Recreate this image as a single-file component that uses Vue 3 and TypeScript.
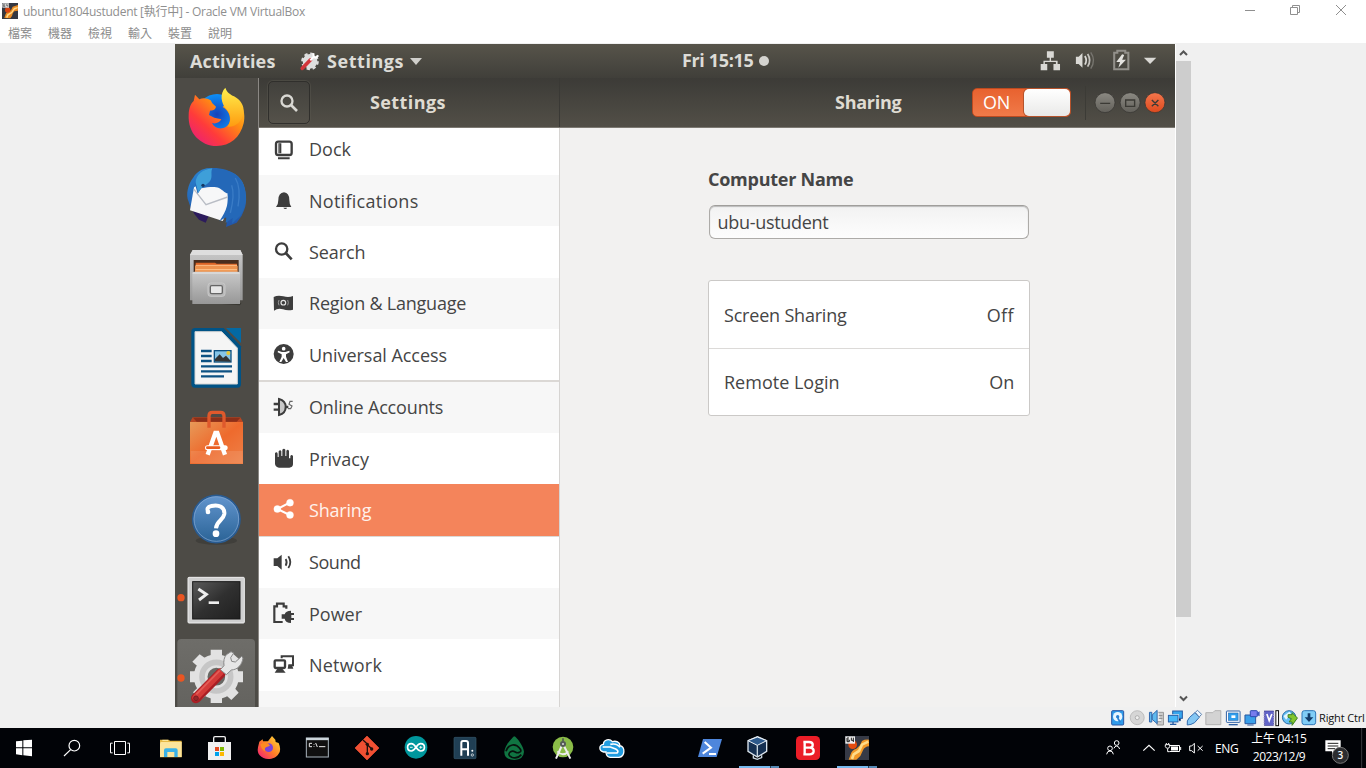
<script setup lang="ts">
interface Row {
  name: string
  icon: string
  view: string
  spacing: string
  alt?: boolean
  active?: boolean
  group?: boolean
}

const menus: string[] = ['檔案', '機器', '檢視', '輸入', '裝置', '說明']

const rows: Row[] = [
  { name: 'Dock', icon: 'dock', view: '39 29 72 72', spacing: '0' },
  { name: 'Notifications', icon: 'bell', view: '39 183 72 72', spacing: '.27px', alt: true },
  { name: 'Search', icon: 'search', view: '39 337 72 72', spacing: '-.1px' },
  { name: 'Region & Language', icon: 'flag', view: '39 491 72 72', spacing: '-.23px', alt: true },
  { name: 'Universal Access', icon: 'access', view: '39 645 72 72', spacing: '-.05px' },
  { name: 'Online Accounts', icon: 'online', view: '39 46 72 72', spacing: '-.15px', alt: true, group: true },
  { name: 'Privacy', icon: 'hand', view: '39 201 72 72', spacing: '.12px' },
  { name: 'Sharing', icon: 'share', view: '39 354 72 72', spacing: '-.2px', active: true },
  { name: 'Sound', icon: 'sound', view: '39 511 72 72', spacing: '-.45px' },
  { name: 'Power', icon: 'power', view: '39 665 72 72', spacing: '0', alt: true },
  { name: 'Network', icon: 'network', view: '39 819 72 72', spacing: '.2px' },
  { name: '', icon: 'more', view: '39 971 72 72', spacing: '0', alt: true },
]
</script>

<template>
  <div class="screen">
    <header class="titlebar">
      <svg class="app-icon" viewBox="6 9 48 48">
        <rect x="6" y="9" width="48" height="48" fill="#343741" />
        <path d="M13 54 17 42Q20 34 33 31L38 20 54 15V32L43 34Q38 37 36 48L31 55Z" fill="#e98a22" />
        <path d="M18 52 22 43 34 36 42 24 53 21V25L43 29 36 40 26 46 22 54Z" fill="#ffd98a" />
        <circle cx="23" cy="30" r="8" fill="#d84412" />
        <rect x="7" y="10" width="20" height="13" fill="#e6e6e6" />
        <path d="M10 13H15M10 13V20H15V17H10M19 12V17H24M24 12V21" stroke="#555" stroke-width="2" fill="none" />
      </svg>
      <span class="title">ubuntu1804ustudent [執行中] - Oracle VM VirtualBox</span>
      <svg class="win-controls" viewBox="0 0 138 24">
        <g fill="none" stroke="#8f8f8f">
          <path d="M17 10.5H27M62.500 7.500H69.500V14.500H62.500ZM64.500 7.500V5.500H71.500V12.500H69.500M108 5 118 15M118 5 108 15" />
        </g>
      </svg>
    </header>
    <nav class="menubar"><span v-for="m in menus" :key="m">{{ m }}</span></nav>

    <main class="stage">
      <div class="vm">
        <div class="topbar">
          <span class="activities">Activities</span>
          <svg class="tb-icon" viewBox="900 150 60 60">
            <circle cx="930" cy="181" r="12" fill="none" stroke="#dedede" stroke-width="20" />
            <circle cx="930" cy="181" r="23" fill="none" stroke="#dedede" stroke-width="7" stroke-dasharray="10 8.060" />
            <path d="M907 202 931 177" stroke="#d3343a" stroke-width="11" stroke-linecap="round" />
            <path d="M931 178 943 165M941 157Q938 169 948 170L955 163" stroke="#fff" stroke-width="6" fill="none" />
          </svg>
          <span class="app-name">Settings</span>
          <svg class="caret" viewBox="0 0 12 7"><path d="M0 0H12L6 7Z" fill="#d0cfcb" /></svg>
          <span class="clock">Fri 15:15</span>
          <i class="dot"></i>
          <svg class="indicators" viewBox="1104 0 339 102" preserveAspectRatio="none">
            <path d="M1124 22H1144V41H1124ZM1106 60H1125V79H1106ZM1143 60H1162V79H1143ZM1132 40H1136V50H1155V60H1150V54H1118V60H1114V50H1132Z" fill="#dad9d5" />
            <path d="M1208 38H1216L1227 27V71L1216 60H1208Z" fill="#dad9d5" />
            <path d="M1234 36Q1242 49 1234 62" fill="none" stroke="#dad9d5" stroke-width="5" />
            <path d="M1242 30Q1254 49 1242 68" fill="none" stroke="#c5c3be" stroke-width="5" />
            <path d="M1251 25Q1267 49 1251 74" fill="none" stroke="#77756f" stroke-width="4" />
            <path d="M1319 76V26H1328V20H1351V26H1360V76Z" fill="none" stroke="#92908a" stroke-width="6" />
            <path d="M1342 31 1325 54H1336L1331 71 1353 47H1342L1348 33Z" fill="#e4e3df" />
            <path d="M1405 41H1441L1423 60Z" fill="#dad9d5" />
          </svg>
        </div>

        <div class="body">
          <aside class="dock">
            <svg viewBox="0 0 249 240">
              <defs>
                <linearGradient id="fx" x1="0" y1="1" x2="1" y2="0">
                  <stop offset="0" stop-color="#e4168c" /><stop offset=".35" stop-color="#ff3b3a" />
                  <stop offset=".65" stop-color="#ff8e12" /><stop offset="1" stop-color="#ffdc35" />
                </linearGradient>
                <radialGradient id="globe"><stop offset="0" stop-color="#1742b8" /><stop offset="1" stop-color="#0c8ff8" /></radialGradient>
                <linearGradient id="yel" x1="0" y1="0" x2="0" y2="1"><stop offset="0" stop-color="#fff04c" /><stop offset="1" stop-color="#ff9b10" /></linearGradient>
              </defs>
              <circle cx="126" cy="109" r="61" fill="url(#globe)" />
              <path d="M41 110C42 88 48 76 56 69L60 50 73 64C84 58 98 61 107 67L112 76 123 86C121 96 112 97 105 98L102 111 118 119 139 124C134 133 122 139 111 135C120 158 157 156 164 132C168 113 159 96 143 87C160 65 184 61 195 79C209 92 210 119 206 136C196 179 165 204 125 204C76 203 38 165 41 110Z" fill="url(#fx)" />
              <path d="M151 29C134 46 137 75 155 94C167 108 171 128 157 146C180 149 201 132 206 101C207 82 197 66 177 55C166 49 156 44 151 29Z" fill="url(#yel)" />
            </svg>
            <svg viewBox="0 240 249 240">
              <defs><linearGradient id="tb" x1="0" y1="0" x2="0" y2="1"><stop offset="0" stop-color="#2a83d0" /><stop offset="1" stop-color="#2154a8" /></linearGradient></defs>
              <path d="M50 398 41 371C31 351 39 318 56 297C62 285 84 268 107 270L116 277C151 271 186 285 202 311C214 333 218 373 207 397L200 413 185 434 153 447 158 420 45 390Z" fill="url(#tb)" />
              <path d="M53 398 101 414 92 434 72 425 58 408Z" fill="#2c1b5c" />
              <path d="M57 328 83 314 158 326 158 400 143 429 45 397Z" fill="#f7f7f8" />
              <path d="M57 334 93 380 158 357" fill="none" stroke="#b9bdc5" stroke-width="4" />
              <path d="M102 271C78 280 62 300 61 322L68 347 79 331C100 327 120 325 132 330C146 338 150 346 158 346C162 371 156 398 133 430L154 417 152 435 173 420 171 437 196 413C218 381 220 324 187 293C164 275 130 268 102 271Z" fill="#2468b8" />
              <path d="M62 314C62 291 84 273 112 271C104 286 119 303 96 318 83 326 76 331 70 345Z" fill="#3e9fd9" />
              <path d="M181 300Q199 330 189 385M170 322Q180 350 166 405" fill="none" stroke="#3a7cc6" stroke-width="4" />
              <circle cx="84" cy="322" r="5" fill="#163864" />
            </svg>
            <svg viewBox="0 480 249 240">
              <defs><linearGradient id="fl" x1="0" y1="0" x2="0" y2="1"><stop offset="0" stop-color="#c9c9c9" /><stop offset="1" stop-color="#979797" /></linearGradient></defs>
              <path d="M45 671 195 682 204 668 200 675Z" fill="#393832" />
              <path d="M53 516H196L203 530V667H45V530Z" fill="url(#fl)" />
              <path d="M53 516H196L203 531H45Z" fill="#dedede" />
              <rect x="56" y="546" width="135" height="40" fill="#4a2e1e" />
              <path d="M62 560V554H120L125 557H186V586H62Z" fill="#dc6425" />
              <path d="M60 563H188V583H60Z" fill="#ee934e" />
              <path d="M62 562H186M62 575H186" stroke="#ffc58f" stroke-width="3" />
              <path d="M52 586 57 581H190L195 586V678H52Z" fill="url(#fl)" />
              <path d="M53 585H194" stroke="#ddd" stroke-width="4" />
              <rect x="99" y="615" width="51" height="40" rx="8" fill="#b9b9b9" stroke="#c8c8c8" stroke-width="3" />
              <rect x="106" y="623" width="36" height="24" rx="4" fill="#e7e7e7" stroke="#666" stroke-width="4" />
            </svg>
            <svg viewBox="0 9 249 240">
              <path d="M60 39H146L198 94V207Q198 218 188 218H60Q49 218 49 207V50Q49 39 60 39Z" fill="#005386" />
              <path d="M153 39H198V84Z" fill="#0369a3" />
              <path d="M60 50H140L187 99V207H60Z" fill="#f5f5f5" stroke="#d5d5d5" stroke-width="3" />
              <path d="M78 108H110M78 123H110M78 138H110M78 154H171M78 169H171M78 184H147" stroke="#0d5182" stroke-width="7" />
              <rect x="118" y="107" width="50" height="34" fill="#86c5e8" stroke="#0d5182" stroke-width="4" />
              <circle cx="160" cy="114" r="6" fill="#e6c838" />
              <path d="M120 139V132L134 118 144 129 153 122 167 137V140Z" fill="#343434" />
            </svg>
            <svg viewBox="0 249 249 240">
              <defs><linearGradient id="sw" x1="0" y1="0" x2="1" y2="1"><stop offset="0" stop-color="#e79a59" /><stop offset=".5" stop-color="#ee6a2d" /><stop offset="1" stop-color="#ee8148" /></linearGradient></defs>
              <path d="M53 307H196L204 321H45Z" fill="#b94622" />
              <path d="M54 308 65 320H185L196 308" fill="#8b2f19" />
              <path d="M45 321H204V447H45Z" fill="url(#sw)" />
              <path d="M47 408H203V445H47Z" fill="#fff" opacity=".1" />
              <path d="M102 338V303Q102 292 112 292H137Q147 292 147 303V338" fill="none" stroke="#df592c" stroke-width="10" />
              <path d="M98 419 121 354H127L150 419" fill="none" stroke="#fff" stroke-width="13" />
              <rect x="90" y="391" width="68" height="15" rx="7.500" fill="#fff" />
              <path d="M97 398H132" stroke="#e95d21" stroke-width="8" stroke-linecap="round" />
            </svg>
            <svg viewBox="0 489 249 240">
              <defs><linearGradient id="hp" x1="0" y1="0" x2="0" y2="1"><stop offset="0" stop-color="#6295ce" /><stop offset="1" stop-color="#2a6396" /></linearGradient></defs>
              <ellipse cx="124" cy="677" rx="62" ry="12" fill="#403f3b" />
              <circle cx="124" cy="612" r="71" fill="url(#hp)" stroke="#295b91" stroke-width="5" />
              <circle cx="124" cy="612" r="67" fill="none" stroke="#8aabd4" stroke-width="2" />
              <path d="M100 592Q92 576 109 573C132 567 150 577 148 597C145 617 124 617 123 640" fill="none" stroke="#fff" stroke-width="12" />
              <circle cx="99" cy="591" r="7" fill="#fff" /><circle cx="123" cy="656" r="10" fill="#fff" />
            </svg>
            <svg viewBox="0 24 249 240">
              <defs><linearGradient id="tm" x1="0" y1="0" x2="1" y2="1"><stop offset="0" stop-color="#5a5a5a" /><stop offset=".5" stop-color="#303030" /><stop offset="1" stop-color="#202020" /></linearGradient></defs>
              <circle cx="18" cy="143" r="11" fill="#ea5522" />
              <rect x="39" y="82" width="169" height="137" rx="3" fill="#cfcfcf" stroke="#eee" stroke-width="3" />
              <rect x="53" y="95" width="142" height="112" fill="url(#tm)" stroke="#191919" stroke-width="3" />
              <path d="M70 117 94 133 72 150" fill="none" stroke="#eee" stroke-width="9" /><path d="M101 158H132" stroke="#eee" stroke-width="8" />
            </svg>
            <svg viewBox="0 264 249 240">
              <defs><linearGradient id="bg" x1="0" y1="0" x2="0" y2="1"><stop offset="0" stop-color="#6e6d69" /><stop offset="1" stop-color="#64635f" /></linearGradient></defs>
              <path d="M7 471V279Q7 267 19 267H228Q240 267 240 279V471Z" fill="url(#bg)" />
              <circle cx="18" cy="384" r="11" fill="#ea5522" />
              <circle cx="124" cy="380" r="47" fill="none" stroke="#e2e2e2" stroke-width="41" />
              <path d="M107 322V299H141V322ZM107 438V459H141V438ZM183 364H204V397H183ZM45 364H66V397H45ZM153 328 169 307 196 331 177 351ZM71 352 52 335 74 313 95 328ZM72 409 54 427 77 449 96 434ZM176 411 191 428 169 450 150 433Z" fill="#e2e2e2" />
              <circle cx="124" cy="380" r="43" fill="none" stroke="#c6c6c6" stroke-width="17" />
              <path d="M63 445 137 370" stroke="#a91e24" stroke-width="30" stroke-linecap="round" />
              <path d="M62 443 136 367" stroke="#d33a38" stroke-width="20" stroke-linecap="round" />
              <path d="M64 433 134 362" stroke="#e35b56" stroke-width="5" />
              <path d="M136 359 147 347Q144 326 154 314L168 305 176 309 167 323 170 334 181 336 200 319 204 324C201 344 189 359 169 360L154 374Z" fill="#e6e6e6" stroke="#888" stroke-width="3" />
              <circle cx="63" cy="445" r="7" fill="#96272b" stroke="#7b2022" stroke-width="3" />
            </svg>
          </aside>

          <section class="window">
            <header class="headerbar">
              <div class="head-left">
                <button class="search-btn">
                  <svg viewBox="836 278 60 60"><circle cx="860" cy="302" r="16.500" fill="none" stroke="#d9d8d3" stroke-width="7" /><path d="M872 314 890 332" stroke="#d9d8d3" stroke-width="8" /></svg>
                </button>
                <span class="h-settings">Settings</span>
              </div>
              <div class="head-right">
                <span class="h-sharing">Sharing</span>
                <div class="switch"><span>ON</span><i></i></div>
                <i class="vsep"></i>
                <svg class="wm" viewBox="1260 132 210 90" preserveAspectRatio="none">
                  <defs>
                    <linearGradient id="gb" x1="0" y1="0" x2="0" y2="1"><stop offset="0" stop-color="#8b8982" /><stop offset="1" stop-color="#62605a" /></linearGradient>
                    <linearGradient id="ob" x1="0" y1="0" x2="0" y2="1"><stop offset="0" stop-color="#f4764c" /><stop offset="1" stop-color="#dd4a1e" /></linearGradient>
                  </defs>
                  <g stroke="#34332f" stroke-width="2">
                    <ellipse cx="1292" cy="176" rx="29" ry="30" fill="url(#gb)" />
                    <ellipse cx="1365" cy="176" rx="29" ry="30" fill="url(#gb)" />
                    <ellipse cx="1437" cy="176" rx="29" ry="30" fill="url(#ob)" />
                  </g>
                  <path d="M1278 178H1307M1352 168H1378V187H1352ZM1428 168 1447 187M1447 168 1428 187" fill="none" stroke="#3b3a35" stroke-width="4" />
                </svg>
              </div>
            </header>

            <div class="panes">
              <ul class="list">
                <li v-for="r in rows" :key="r.icon" :class="{ alt: r.alt, active: r.active, group: r.group }">
                  <svg :viewBox="r.view" fill="#3d3d3d" stroke="none">
                    <template v-if="r.icon === 'dock'">
                      <rect x="51" y="40" width="47" height="40" rx="7" fill="none" stroke="#3d3d3d" stroke-width="7" />
                      <path d="M58 45H67V75H58ZM57 87H92V93H57Z" /><path d="M60 46V74" stroke="#aaa" stroke-width="2" />
                    </template>
                    <path v-else-if="r.icon === 'bell'" d="M51 237Q58 230 58 216Q58 195 75 193Q91 195 91 216Q91 230 97 237ZM73 239H84Q84 243 79 243Q75 243 73 239Z" />
                    <template v-else-if="r.icon === 'search'">
                      <circle cx="68" cy="364" r="17" fill="none" stroke="#3d3d3d" stroke-width="7" /><path d="M80 376 98 395" stroke="#3d3d3d" stroke-width="8" />
                    </template>
                    <template v-else-if="r.icon === 'flag'">
                      <path d="M44 506Q57 499 73 504T102 503V544Q87 548 72 543T45 547Z" />
                      <circle cx="73" cy="523" r="7" fill="none" stroke="#e4e4e4" stroke-width="3.500" />
                      <path d="M60 515Q56 523 60 531M86 515Q90 523 86 531" fill="none" stroke="#aaa" stroke-width="2.500" />
                    </template>
                    <template v-else-if="r.icon === 'access'">
                      <circle cx="74" cy="678" r="30" /><circle cx="74" cy="662" r="5.500" fill="#fff" />
                      <path d="M57 668 69 672H79L91 668 92 673 81 679V686L87 702H81L74 690 67 702H61L68 686V679L56 673Z" fill="#fff" />
                    </template>
                    <template v-else-if="r.icon === 'online'">
                      <path d="M60 55Q80 60 80 79T60 103Z" fill="#c8c8c8" stroke="#3d3d3d" stroke-width="6" />
                      <path d="M44 70H60M44 87H60M79 79H88" stroke="#3d3d3d" stroke-width="7" />
                      <path d="M101 62H93L90 71 99 76 95 84H87" fill="none" stroke="#666" stroke-width="3.500" />
                    </template>
                    <path v-else-if="r.icon === 'hand'" d="M48 219Q54 214 56 221V231H59V214Q64 208 67 214V228H70V209Q75 203 79 209V228H82V212Q87 206 90 213V235H94V228Q98 222 102 228V253Q101 263 91 263H60Q50 262 48 252Z" />
                    <g v-else-if="r.icon === 'share'" fill="#fff" stroke="#fff">
                      <circle cx="55" cy="387" r="10.500" /><circle cx="93" cy="368" r="10.500" /><circle cx="93" cy="405" r="10.500" />
                      <path d="M92 368 55 387 92 405" fill="none" stroke-width="6" />
                    </g>
                    <template v-else-if="r.icon === 'sound'">
                      <path d="M44 533H55L68 522V567L55 556H44Z" /><path d="M80 535Q86 545 80 555M88 527Q100 545 88 562" fill="none" stroke="#3d3d3d" stroke-width="5.500" />
                    </template>
                    <template v-else-if="r.icon === 'power'">
                      <path d="M71 725H46V678H54V670H74V678H82V685" fill="none" stroke="#3d3d3d" stroke-width="6.500" />
                      <path d="M77 702Q80 691 96 691V698H105V704H97V713H105V719H96V728Q80 728 77 715H68V702Z" />
                    </template>
                    <template v-else-if="r.icon === 'network'">
                      <path d="M68 835V829H102V856H88" fill="none" stroke="#3d3d3d" stroke-width="6" />
                      <rect x="47" y="841" width="31" height="23" rx="3" fill="none" stroke="#3d3d3d" stroke-width="7" />
                      <path d="M55 866H70L80 878H47ZM88 856H99L103 866H86Z" />
                    </template>
                    <path v-else d="M55 983Q65 976 75 983V985H55Z" />
                  </svg>
                  <span :style="{ letterSpacing: r.spacing }">{{ r.name }}</span>
                </li>
              </ul>
              <div class="detail">
                <h2>Computer Name</h2>
                <div class="entry"><span>ubu-ustudent</span></div>
                <div class="card">
                  <div class="item"><span class="k-screen">Screen Sharing</span><span class="v-off">Off</span></div>
                  <div class="item"><span>Remote Login</span><span class="v-on">On</span></div>
                </div>
              </div>
            </div>
          </section>
        </div>
      </div>

      <div class="scrollbar">
        <svg viewBox="0 0 15 17"><path d="M4 11 7.500 7.500 11 11" fill="none" stroke="#555" stroke-width="2" /></svg>
        <i class="thumb"></i>
        <svg viewBox="0 0 15 17"><path d="M4 6.500 7.500 10 11 6.500" fill="none" stroke="#555" stroke-width="2" /></svg>
      </div>
    </main>

    <footer class="statusbar">
      <svg viewBox="54 54 57.3 60">
        <rect x="65" y="62" width="36" height="43" rx="3" fill="#2f9bea" stroke="#2b57a4" stroke-width="3" />
        <circle cx="83" cy="80" r="14" fill="#e9f6ff" /><circle cx="83" cy="80" r="5" fill="#2980d2" /><path d="M91 97 83 84" stroke="#2980d2" stroke-width="5" />
      </svg>
      <svg viewBox="111.3 54 57.3 60"><circle cx="142" cy="83" r="21" fill="#d6d6d6" stroke="#aaa" stroke-width="2" /><circle cx="142" cy="83" r="6" fill="#eee" stroke="#999" stroke-width="2" /></svg>
      <svg viewBox="168.6 54 57.3 60">
        <path d="M206 67H221V105H202V95H215" fill="#ccc" stroke="#999" stroke-width="3" /><path d="M207 77H218M207 85H218" stroke="#888" stroke-width="3" />
        <path d="M179 67H186V96H179ZM187 75 202 61V101L187 88Z" fill="#5eb9ee" stroke="#3268ad" stroke-width="3" />
      </svg>
      <svg viewBox="225.9 54 57.3 60">
        <rect x="249" y="63" width="29" height="22" fill="#36a5ed" stroke="#275ca4" stroke-width="3" /><path d="M260 86H272V92H256" stroke="#275ca4" stroke-width="3" />
        <rect x="236" y="76" width="29" height="20" fill="#47b8f7" stroke="#fff" stroke-width="6" /><rect x="236" y="76" width="29" height="20" fill="#47b8f7" stroke="#275ca4" stroke-width="3" /><path d="M241 103H260M250 96V103" stroke="#275ca4" stroke-width="4" />
      </svg>
      <svg viewBox="283.2 54 57.3 60"><path d="M293 105Q290 92 300 82L316 68 329 82 315 98Q304 105 293 105Z" fill="#84c7f4" stroke="#356caf" stroke-width="3" /><path d="M317 67 324 61 336 73 329 81Z" fill="#eef7ff" stroke="#5c83b1" stroke-width="3" /></svg>
      <svg viewBox="340.5 54 57.3 60"><path d="M349 104V68H370L376 62H394V104Z" fill="#d3d3d3" stroke="#b2b2b2" stroke-width="3" /></svg>
      <svg viewBox="397.8 54 57.3 60"><rect x="408" y="63" width="41" height="34" rx="2" fill="#fff" stroke="#2e5fa4" stroke-width="3" /><rect x="414" y="69" width="29" height="22" fill="#2f9ded" stroke="#2e6fb4" stroke-width="2" /><rect x="423" y="76" width="12" height="8" fill="#fff" /><path d="M415 104H442" stroke="#2e5fa4" stroke-width="4" /></svg>
      <svg viewBox="455.1 54 57.3 60"><path d="M464 75H496V101H464Z" fill="#3a9fe8" stroke="#2757a0" stroke-width="3" /><path d="M471 105H490" stroke="#2757a0" stroke-width="3" /><rect x="480" y="62" width="21" height="18" rx="2" fill="#777ced" stroke="#2d4ab0" stroke-width="3" /><path d="M500 68 508 64V79L500 75Z" fill="#3e54bd" /></svg>
      <svg viewBox="512.4 54 57.3 60">
        <rect x="523" y="63" width="27" height="43" fill="#6265c8" stroke="#403e94" stroke-width="2" /><path d="M521 67V104M551 67V104" stroke="#bbb5ea" stroke-width="3" stroke-dasharray="4 3" />
        <path d="M530 72 537 92 545 72" fill="none" stroke="#fff" stroke-width="5" /><rect x="557" y="62" width="8" height="45" fill="#fff" stroke="#111" stroke-width="3" />
      </svg>
      <svg viewBox="569.7 54 57.3 60"><circle cx="597" cy="82" r="20" fill="#64bff2" stroke="#2868a7" stroke-width="3" /><path d="M580 78 598 65 603 72 588 89Z" fill="#e5f5fe" /><path d="M594 74H606V68L622 84 606 106V96H597L604 86 594 82Z" fill="#81c62c" stroke="#3e8022" stroke-width="3" /></svg>
      <svg viewBox="627 54 57.3 60"><rect x="636" y="62" width="41" height="42" rx="7" fill="#80cdf7" stroke="#2f76b8" stroke-width="3" /><path d="M653 70H661V82H670L657 96 644 82H653Z" fill="#123b69" /></svg>
      <span class="host-key">Right Ctrl</span>
    </footer>

    <div class="taskbar">
      <svg class="sys" viewBox="0 9 144 120"><path d="M48 49 67 47V67H48ZM70 46 96 44V67H70ZM48 70H67V91L48 88ZM70 70H96V94L70 91Z" fill="#fff" /></svg>
      <svg class="sys" viewBox="144 9 144 120"><circle cx="223" cy="62" r="16" fill="none" stroke="#fff" stroke-width="3.500" /><path d="M212 74 192 93" stroke="#fff" stroke-width="3.500" /></svg>
      <svg class="sys" viewBox="288 9 144 120"><path d="M343.500 49.500H376.500V88.500H343.500ZM338 54.500H331.500V83.500H338M382 54.500H388.500V83.500H382" fill="none" stroke="#fff" stroke-width="3" /></svg>
      <div class="apps">
        <svg viewBox="438 9 147 120"><path d="M480 44H506L510 47H545V97H480Z" fill="#e7b945" /><path d="M482 51H545V96H480V56Z" fill="#fce49b" /><path d="M492 96V76Q492 70 498 70H527Q533 70 533 76V96H523V81H502V96Z" fill="#39b1e7" /><path d="M487 46H504" stroke="#fff0a8" stroke-width="3" /></svg>
        <svg viewBox="585 9 147 120"><path d="M641 52V39Q641 35 645 35H672Q676 35 676 39V52" fill="none" stroke="#f0f0f0" stroke-width="4" /><path d="M624 51H693V105H624Z" fill="#f0f0f0" /><path d="M645 66H657V78H645Z" fill="#e54b22" /><path d="M660 66H672V78H660Z" fill="#7eb900" /><path d="M645 81H657V93H645Z" fill="#00a2ec" /><path d="M660 81H672V93H660Z" fill="#fdb800" /></svg>
        <svg viewBox="732 9 147 120">
          <defs><linearGradient id="f2" x1="1" y1="0" x2="0" y2="1"><stop offset="0" stop-color="#ffe33d" /><stop offset=".5" stop-color="#ff8126" /><stop offset="1" stop-color="#f3147c" /></linearGradient></defs>
          <path d="M774 67 778 50 788 43 789 49 804 49 816 33 826 44 827 51 836 54Q845 75 836 86C826 104 793 108 779 91Q771 82 774 67Z" fill="url(#f2)" /><circle cx="806" cy="68" r="13" fill="#7c43d8" /><path d="M781 58Q791 52 804 55L810 62 798 67Q792 70 796 79Q785 76 781 58Z" fill="#ff8b20" />
        </svg>
        <svg viewBox="879 9 147 120"><rect x="919" y="39" width="66" height="57" fill="#101010" stroke="#a9b4bc" stroke-width="3" /><path d="M918 42H986" stroke="#cad4da" stroke-width="7" /><path d="M936 55H928V65H936M942 57V59M942 64V66M947 54 952 66M957 65H976" fill="none" stroke="#eee" stroke-width="3" /></svg>
        <svg viewBox="1026 9 147 120"><path d="M1101 33 1137 69 1101 105 1065 69Z" fill="#f05033" stroke="#f05033" stroke-width="2" stroke-linejoin="round" /><path d="M1089 45 1102 57V88M1102 59 1115 71" fill="none" stroke="#20100c" stroke-width="4" /><circle cx="1102" cy="58" r="5" fill="#20100c" /><circle cx="1102" cy="86" r="5" fill="#20100c" /><circle cx="1115" cy="72" r="5" fill="#20100c" /></svg>
        <svg viewBox="3 9 147 120"><circle cx="78" cy="67" r="34" fill="#00979d" /><path d="M78 67C72 58 68 56 64 56C49 56 49 78 64 78C68 78 72 76 78 67C84 58 88 56 92 56C107 56 107 78 92 78C88 78 84 76 78 67Z" fill="none" stroke="#fff" stroke-width="5" /><path d="M60 67H68M88 67H97M92 63V71" stroke="#fff" stroke-width="2.500" /></svg>
        <svg viewBox="150 9 147 120"><rect x="192" y="37" width="66" height="64" rx="3" fill="#203f54" stroke="#37576b" stroke-width="2" /><path d="M214 92V54Q214 48 219 48H228Q234 48 234 54V92M214 73H234" fill="none" stroke="#fff" stroke-width="6" /><circle cx="247" cy="77" r="3" fill="#fff" /><circle cx="247" cy="90" r="3.500" fill="none" stroke="#fff" stroke-width="2" /></svg>
        <svg viewBox="297 9 147 120"><path d="M372 34C359 46 343 66 343 81Q343 104 373 105Q401 103 402 80C400 65 387 45 376 35Z" fill="#107542" /><path d="M348 79C356 55 378 55 389 70Q397 79 388 82C377 88 374 73 362 80Q350 89 365 97Q382 103 394 89" fill="none" stroke="#07120d" stroke-width="5" /></svg>
        <svg viewBox="444 9 147 120"><circle cx="519" cy="66" r="31" fill="#8abc48" /><path d="M515 63 498 101M522 63 541 101M502 79Q519 97 535 79" stroke="#eee" stroke-width="6" fill="none" /><circle cx="519" cy="57" r="9" fill="#555c58" /><circle cx="519" cy="57" r="3" fill="#ddd" /><path d="M519 40V49" stroke="#525b54" stroke-width="5" /></svg>
        <svg viewBox="591 9 147 120"><path d="M648 81H641C626 78 626 60 640 58C641 43 659 40 667 50C678 46 690 52 690 62C706 66 706 94 687 97H660Q648 95 648 81Z" fill="#219cdf" stroke="#fff" stroke-width="4" /><path d="M638 66H661L677 72Q688 78 681 84H651M661 58Q681 54 690 67" fill="none" stroke="#fff" stroke-width="5" /></svg>
        <i></i>
        <svg viewBox="885 9 147 120"><path d="M939 42H996L980 96H924Z" fill="#4e86dc" /><path d="M944 51 963 68 938 86M957 87H978" fill="none" stroke="#fff" stroke-width="6" /></svg>
        <svg viewBox="1032 9 147 120"><path d="M1102 35 1130 47V79L1102 96 1074 79V47Z" fill="#153051" stroke="#dce6ef" stroke-width="4" /><path d="M1074 47 1102 61 1130 47 1102 36Z" fill="#2d5a8c" stroke="#eef3f7" stroke-width="3" /><path d="M1102 60V96M1090 91V99L1102 103 1115 98V91" fill="none" stroke="#c8d5df" stroke-width="4" /><path d="M1047 123H1141V129H1047Z" fill="#76b9ed" /><path d="M1143 123H1167V129H1143Z" fill="#568ab5" /></svg>
        <svg viewBox="1179 9 147 120"><rect x="1218" y="33" width="72" height="72" rx="13" fill="#eb1d27" /><path d="M1240 51H1257C1273 51 1270 67 1260 68C1275 69 1275 88 1258 88H1240M1244 51V88M1244 68H1260" fill="none" stroke="#fff" stroke-width="7" /></svg>
        <svg viewBox="1326 9 147 120"><rect x="1365" y="33" width="72" height="72" fill="#363a46" /><path d="M1376 104 1382 88Q1386 74 1399 71L1410 61 1416 48Q1424 43 1437 44V64Q1424 65 1419 76L1411 93 1399 104Z" fill="#f29827" /><path d="M1386 102 1391 88 1407 78 1416 59 1435 50" fill="none" stroke="#ffdc89" stroke-width="8" /><circle cx="1388" cy="59" r="13" fill="#e44b0d" /><rect x="1366" y="34" width="29" height="22" fill="#eee" /><path d="M1377 39H1371V50H1378V45H1371M1384 38V46H1391M1390 38V51" fill="none" stroke="#222" stroke-width="3" /><path d="M1341 123H1435V129H1341Z" fill="#76b9ed" /><path d="M1437 123H1461V129H1437Z" fill="#568ab5" /></svg>
      </div>
      <div class="tray">
        <svg class="tray-icons" viewBox="42 114 312 120">
          <g fill="none" stroke="#fff" stroke-width="3">
            <circle cx="80" cy="159" r="7" /><path d="M72 175Q74 168 80 168T89 177" /><circle cx="60" cy="175" r="7" /><path d="M50 193Q51 183 60 183T70 193" />
            <path d="M160 182 177 166 194 182" stroke-width="3.500" />
            <path d="M239 166.500H268.500V184.500H239M272 171V180M226 164H239V170Q238 175 233 175T226 170ZM229 159V163M236 159V163M233 176V185H239" /><path d="M243 175.500H264" stroke-width="12" />
            <path d="M299 168H305L313 160V189L305 182H299ZM323 168 338 182M338 168 323 182" />
          </g>
        </svg>
        <span class="lang">ENG</span>
        <div class="datetime"><span class="time">上午 04:15</span><span class="date">2023/12/9</span></div>
        <svg class="notify" viewBox="696 114 132 120">
          <path d="M706 151H752V184H736L726 194V184H706Z" fill="#fff" /><path d="M713 160H745M713 168H745M713 176H735" stroke="#222" stroke-width="3" />
          <circle cx="751" cy="196" r="24" fill="#2c2d30" stroke="#777" stroke-width="3" />
          <text x="751" y="207" fill="#fff" font-size="30" font-family="Open Sans" font-weight="600" text-anchor="middle">3</text>
          <path d="M815 114V234" stroke="#55585b" stroke-width="2" />
        </svg>
      </div>
    </div>
  </div>
</template>

<style>
body { margin: 0; overflow: hidden; }
</style>

<style scoped>
* { box-sizing: border-box; }
.screen { width: 1366px; height: 768px; display: flex; flex-direction: column; overflow: hidden; background: #f0f0f0; font-family: "Open Sans", "Noto Sans CJK TC", sans-serif; white-space: nowrap; }
svg { display: block; flex: none; }
i { display: block; flex: none; }
span { flex: none; }
.titlebar { height: 24px; flex: none; background: #fff; display: flex; align-items: center; padding-left: 2px; color: #8f8f8f; font-size: 12px; }
.app-icon { width: 16px; height: 16px; margin-top: -2px; }
.title { margin-left: 5px; letter-spacing: -.26px; line-height: 24px; }
.win-controls { width: 138px; height: 24px; margin-left: auto; }
.menubar { height: 19px; flex: none; background: #fff; display: flex; gap: 16px; padding-left: 8px; font: 12px/18px "Noto Sans CJK TC", sans-serif; color: #8c8c8c; }
.menubar span { width: 24px; }
.stage { height: 665px; flex: none; display: flex; padding: 1px 0 0 175px; }
.vm { width: 1000px; height: 663px; flex: none; display: flex; flex-direction: column; overflow: hidden; }
.topbar { height: 34px; flex: none; display: flex; align-items: center; padding-left: 15px; color: #dddcd7; background: linear-gradient(#57544a, #403f3a); font-weight: 700; font-size: 18px; line-height: 34px; }
.activities { width: 110px; letter-spacing: .2px; }
.tb-icon { width: 20px; height: 20px; }
.app-name { margin-left: 7px; width: 83px; letter-spacing: .55px; }
.caret { width: 12px; height: 7px; }
.clock { margin-left: 260px; width: 76px; letter-spacing: -.35px; margin-top: -2px; }
.dot { width: 10px; height: 10px; border-radius: 50%; background: #d4d3cf; margin-left: 1px; }
.indicators { width: 117px; height: 34px; margin-left: auto; margin-right: 18px; }
.body { flex: 1; display: flex; min-height: 0; }
.dock { width: 84px; flex: none; display: flex; flex-direction: column; background: #4d4b46; border-right: 1px solid #8b8884; overflow: hidden; }
.dock svg { width: 83px; height: 80px; }
.window { width: 916px; display: flex; flex-direction: column; }
.headerbar { height: 50px; flex: none; display: flex; background: linear-gradient(#3c3b37, #524f47); border-bottom: 1px solid #7c7972; color: #dfdbd2; font-weight: 700; font-size: 18px; }
.head-left { width: 301px; display: flex; align-items: center; padding-left: 9px; border-right: 1px solid #3a3935; }
.search-btn { width: 42px; height: 43px; flex: none; display: flex; align-items: center; justify-content: center; background: #ffffff06; border: 1px solid #302f2c; border-radius: 5px; box-shadow: 0 0 0 1px #59574f77; padding: 0; }
.search-btn svg { width: 20px; height: 20px; }
.h-settings { margin: -2px 0 0 60px; letter-spacing: .4px; }
.head-right { flex: 1; display: flex; align-items: center; padding-left: 275px; }
.h-sharing { width: 137px; letter-spacing: -.25px; margin-top: -2px; }
.switch { width: 99px; height: 29px; display: flex; align-items: stretch; background: linear-gradient(#e8622f, #f07a49); border: 1px solid #bd4a20; border-radius: 5px; color: #fff; font-weight: 400; line-height: 27px; }
.switch span { width: 51px; padding-left: 10px; letter-spacing: -.3px; }
.switch i { width: 46px; border-radius: 5px; background: linear-gradient(#fff, #e9e9e8); box-shadow: 0 0 0 1px #b5532c; }
.vsep { width: 1px; height: 34px; margin-left: 14px; background: #3c3b36; }
.wm { width: 72.3px; height: 30px; margin-left: 8px; }
.panes { flex: 1; display: flex; min-height: 0; }
.list { width: 301px; flex: none; margin: 0; padding: 0; list-style: none; overflow: hidden; background: #fff; border-right: 1px solid #d6d4d2; font-size: 18px; font-weight: 500; color: #454545; }
.list li { height: 51.33px; display: flex; align-items: center; gap: 13px; padding-left: 13px; }
.list li:first-child { margin-top: -4.2px; }
.list li.group { height: 52.6px; border-top: 2px solid #dbd8d5; }
.list li.alt { background: #f7f7f7; }
.list li.active { background: #f4845b; color: #fff2ec; height: 52.2px; border-bottom: 1px solid #dad8d5; }
.list svg { width: 24px; height: 24px; margin-top: .6px; }
.list span { margin-top: 0; }
.list li.group span { margin-top: -1px; }
.detail { flex: 1; background: #f2f1f0; padding: 38px 0 0 148px; color: #454545; font-size: 18px; font-weight: 500; }
.detail h2 { margin: 0; font-size: 18px; font-weight: 700; line-height: 26px; letter-spacing: -.25px; }
.entry { margin: 13px 0 0 .5px; width: 320px; height: 34px; border: 1px solid #adaba8; border-top-color: #a09e9b; border-radius: 6px; background: linear-gradient(#f2f2f2, #fdfdfd); box-shadow: inset 0 1px 1px #bbb; padding-left: 8px; line-height: 32px; letter-spacing: -.3px; }
.card { margin-top: 41px; width: 322px; height: 136px; border: 1px solid #cbc9c7; border-radius: 3px; background: #fff; }
.item { height: 67px; display: flex; align-items: center; justify-content: space-between; padding: 0 15px; }
.item + .item { border-top: 1px solid #dcdad8; }
.k-screen { letter-spacing: -.2px; }
.v-off { letter-spacing: .4px; }
.v-on { letter-spacing: -.2px; }
.scrollbar { width: 17px; height: 663px; flex: none; display: flex; flex-direction: column; border-left: 1px solid #fff; background: #f0f0f0; }
.scrollbar svg { width: 15px; height: 17px; }
.thumb { width: 15px; height: 556px; background: #cdcdcd; margin-bottom: auto; }
.statusbar { height: 20px; flex: none; display: flex; padding-left: 1108px; background: #f0f0f0; color: #111; }
.statusbar svg { width: 19.1px; height: 20px; }
.host-key { font-size: 11px; line-height: 20px; margin-left: 1px; letter-spacing: -.15px; }
.taskbar { height: 40px; flex: none; display: flex; background: #010307; color: #fff; }
.sys { width: 48px; height: 40px; }
.apps { display: flex; margin-left: 2px; }
.apps svg, .apps i { width: 49px; height: 40px; }
.tray { margin-left: auto; display: flex; align-items: center; font-size: 12px; }
.tray-icons { width: 104px; height: 40px; }
.lang { margin-left: 7px; width: 37px; letter-spacing: -.4px; }
.datetime { width: 54px; display: flex; flex-direction: column; line-height: 18px; align-items: center; }
.time { letter-spacing: -.3px; }
.date { letter-spacing: -.5px; }
.notify { width: 44px; height: 40px; margin-left: 16px; }
</style>
